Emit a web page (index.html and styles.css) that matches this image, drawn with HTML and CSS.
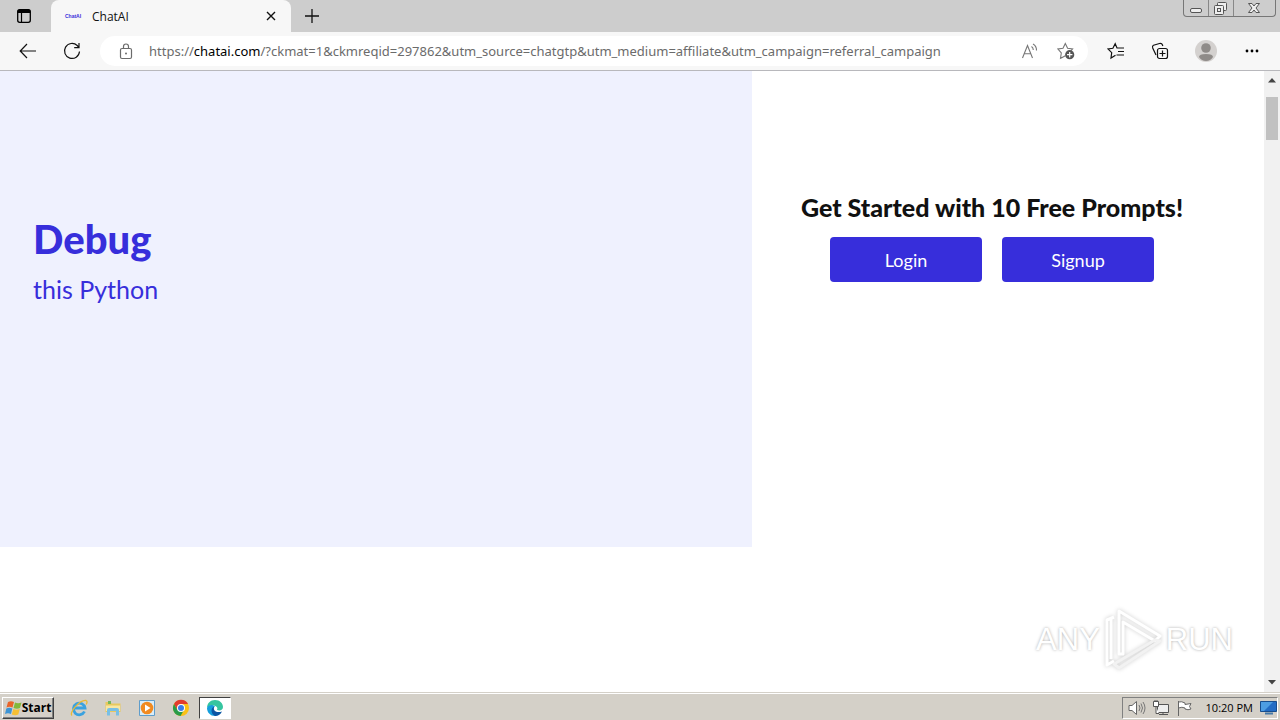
FILE: index.html
```html
<!DOCTYPE html>
<html lang="en">
<head>
<meta charset="utf-8">
<title>ChatAI</title>
<link rel="stylesheet" href="styles.css">
</head>
<body>
<div class="desktop">
  <header class="browser">
    <div class="tabstrip">
      <button class="tab-actions" aria-label="Tab actions">
        <svg width="16" height="16" viewBox="0 0 16 16"><rect x="1.7" y="1.7" width="12.6" height="12.6" rx="2" fill="none" stroke="#000" stroke-width="1.3"/><path d="M1.500 5V3.500a2 2 0 0 1 2-2h9a2 2 0 0 1 2 2V5z"/><path d="M5.500 5v9" stroke="#000" stroke-width="1.200"/></svg>
      </button>
      <div class="tab">
        <span class="favicon">ChatAI</span>
        <span class="tab-title">ChatAI</span>
        <button class="tab-close" aria-label="Close tab"><svg width="10" height="10" viewBox="0 0 10 10"><path d="M1 1l8 8M9 1l-8 8" stroke="#111" stroke-width="1.400"/></svg></button>
      </div>
      <button class="new-tab" aria-label="New tab"><svg width="14" height="14" viewBox="0 0 14 14"><path d="M7 0v14M0 7h14" stroke="#111" stroke-width="1.300"/></svg></button>
      <div class="window-controls">
        <button class="wc" aria-label="Minimize"><svg width="24" height="16" viewBox="0 0 24 16"><rect x="6.500" y="8.500" width="11" height="4" rx="1.500" fill="#eee" stroke="#555"/></svg></button>
        <button class="wc" aria-label="Restore"><svg width="24" height="16" viewBox="0 0 24 16"><g fill="#eee" stroke="#555"><rect x="8.500" y="2.500" width="9" height="8" rx="1"/><rect x="5.500" y="5.500" width="9" height="9" rx="1"/><rect x="8.500" y="8.500" width="3" height="3"/></g></svg></button>
        <button class="wc" aria-label="Close window"><svg width="41" height="16" viewBox="0 0 41 16"><path d="M14.500 3.500h3.500l2 2.500 2-2.500h3.500l-3.500 4.500 3.500 4.500h-3.500l-2-2.500-2 2.500h-3.500l3.500-4.500z" fill="#eee" stroke="#555"/></svg></button>
      </div>
    </div>
    <div class="toolbar">
      <button class="tool back" aria-label="Back"><svg width="18" height="16" viewBox="0 0 18 16"><path d="M17 8H1.500M8 1L1.200 8 8 15" fill="none" stroke="#111" stroke-width="1.200"/></svg></button>
      <button class="tool reload" aria-label="Refresh"><svg width="18" height="18" viewBox="0 0 18 18"><path d="M16.500 9.500A7.500 7.500 0 1 1 14.200 3.500L16 5.500M16 1v4.700h-4.800" fill="none" stroke="#111" stroke-width="1.200"/></svg></button>
      <div class="address">
        <svg class="lock" width="14" height="17" viewBox="0 0 14 17"><rect x="1.500" y="5.500" width="11" height="10" rx="1.500" fill="none" stroke="#6b6b6b" stroke-width="1.200"/><path d="M4.500 5.500V3.500a2.500 2.500 0 0 1 5 0v2" fill="none" stroke="#6b6b6b" stroke-width="1.200"/><circle cx="7" cy="10.500" r="1" fill="#6b6b6b"/></svg>
        <span class="url">https://<b>chatai.com</b>/?ckmat=1&amp;ckmreqid=297862&amp;utm_source=chatgtp&amp;utm_medium=affiliate&amp;utm_campaign=referral_campaign</span>
        <button class="in-address" aria-label="Read aloud"><svg width="18" height="16" viewBox="0 0 18 16"><path d="M1.500 15L6.500 2.500 11.500 15M3.200 10.700h6.600M10.500 3.500q1.800 1.200 1.800 3.500M12 1q3.600 2 3.500 6.500" fill="none" stroke="#777" stroke-width="1.100"/></svg></button>
        <button class="in-address" aria-label="Add to favorites"><svg width="18" height="18" viewBox="0 0 18 18"><path d="M5 15.500l-1.500.8.800-5.300L1 7l5-.8L8.300 1.500 10.600 6.200l5 .8-1.500 1.600M4.300 16l4-2.200" fill="none" stroke="#777" stroke-width="1.100"/><circle cx="12.700" cy="12.700" r="4.600" fill="#555"/><path d="M12.700 10v5.400M10 12.700h5.400" stroke="#fff" stroke-width="1.200"/></svg></button>
      </div>
      <button class="tool" aria-label="Favorites"><svg width="18" height="18" viewBox="0 0 18 18"><path d="M8.500 13.300L4 16l.7-5.400L1 7l4.900-.7L8.200 1.700 10 6h7M11 9.500h6M9.500 13h7.500" fill="none" stroke="#111" stroke-width="1.200"/></svg></button>
      <button class="tool" aria-label="Collections"><svg width="18" height="18" viewBox="0 0 18 18"><path d="M5 13L1.700 6Q1 4 2.500 3.300L8.500 1.500q2.200-.6 3 1.500l.3 1" fill="none" stroke="#111" stroke-width="1.200"/><rect x="6.500" y="6.500" width="10" height="10" rx="2" fill="#f7f7f7" stroke="#111" stroke-width="1.200"/><path d="M11.500 8.500v6M8.500 11.500h6" stroke="#111" stroke-width="1.200"/></svg></button>
      <button class="tool profile" aria-label="Profile"><svg width="22" height="22" viewBox="0 0 22 22"><circle cx="11" cy="11" r="11" fill="#d4d1cf"/><circle cx="11" cy="8" r="4.800" fill="#8f8b88"/><path d="M4 17q0-3 7-3t7 3q-2.500 4-7 4t-7-4z" fill="#8f8b88"/></svg></button>
      <button class="tool more" aria-label="Settings and more"><svg width="14" height="4" viewBox="0 0 14 4"><circle cx="2" cy="2" r="1.400"/><circle cx="7" cy="2" r="1.400"/><circle cx="12" cy="2" r="1.400"/></svg></button>
    </div>
  </header>

  <div class="viewport">
    <main class="page">
      <section class="demo">
        <h1 class="demo-title">Debug</h1>
        <p class="demo-text">this Python</p>
      </section>
      <section class="start">
        <h2 class="start-title">Get Started with 10 Free Prompts!</h2>
        <div class="actions">
          <button class="cta">Login</button>
          <button class="cta">Signup</button>
        </div>
      </section>
    </main>
    <div class="scrollbar">
      <svg width="8" height="5" viewBox="0 0 8 5"><path d="M0 4.500L4 0l4 4.500z" fill="#444"/></svg>
      <div class="track"><div class="thumb"></div></div>
      <svg width="8" height="5" viewBox="0 0 8 5"><path d="M0 0l4 4.500L8 0z" fill="#444"/></svg>
    </div>
    <div class="watermark">
      <span>ANY</span>
      <svg width="58" height="64" viewBox="0 0 58 64"><g fill="none" stroke="#fff" stroke-width="3" stroke-linejoin="round"><path d="M15 46V3l41 25-5 5-32-19v32z"/><path d="M10 9L3 12v45l7-4M7 11v40"/><path d="M10 56l41-24 5 1-41 27z" stroke="#f2f2f2"/></g></svg>
      <span>RUN</span>
    </div>
  </div>

  <footer class="taskbar">
    <button class="start-button"><svg width="17" height="16" viewBox="0 0 17 16"><path d="M3 2q3-1.500 6 0L7.500 7.500q-3-1.300-6 0z" fill="#ea6429"/><path d="M10 2.500q3 1.500 6.500 0L15 8q-3 1.500-6.500 0z" fill="#83b83b"/><path d="M1.300 8.500q3-1.300 6 0L6 14q-3-1.500-6 0z" fill="#3d94d5"/><path d="M8.300 9q3 1.500 6.500 0l-1.500 5.500q-3 1.500-6.500 0z" fill="#f6bf32"/></svg>Start</button>
    <button class="task" aria-label="Internet Explorer"><svg width="18" height="18" viewBox="0 0 18 18"><path d="M14.500 12.500a5.800 5.800 0 1 1 .5-3.500H5" fill="none" stroke="#3aa2df" stroke-width="2.800"/><path d="M2 16.500C-1.500 14 10 .500 16 1.500q2 1 .2 4" fill="none" stroke="#e9b934" stroke-width="1.300"/></svg></button>
    <button class="task" aria-label="Windows Explorer"><svg width="18" height="18" viewBox="0 0 18 18"><path d="M1.500 3h5l1 1.500h9V13h-15z" fill="#e8c85e"/><path d="M4 2h3v3H4z" fill="#77b858"/><path d="M2 6.500h14V12H2z" fill="#f8e7a2"/><path d="M3 16.500V11q0-2 2-2h8q2 0 2 2v5.500h-3V12H6v4.500z" fill="#78bfe5"/></svg></button>
    <button class="task" aria-label="Media Player"><svg width="18" height="18" viewBox="0 0 18 18"><path d="M1.500 1.500h15v15h-15z" fill="#d9edf9" stroke="#5f9dcb"/><circle cx="9" cy="9" r="6.300" fill="#f18a20"/><path d="M7 5.500v7L12.500 9z" fill="#fff"/></svg></button>
    <button class="task" aria-label="Chrome"><svg width="18" height="18" viewBox="0 0 18 18"><circle cx="9" cy="9" r="8" fill="#fbc116"/><path d="M2 5a8 8 0 0 1 14 0H9L5.500 11z" fill="#e23b2e"/><path d="M2 5a8 8 0 0 0 6.500 12l3.500-6H5.500z" fill="#289b49"/><circle cx="9" cy="9" r="4" fill="#fff"/><circle cx="9" cy="9" r="3" fill="#3b7de8"/></svg></button>
    <button class="task active" aria-label="Edge"><svg width="18" height="18" viewBox="0 0 18 18"><path d="M1 9C1 4 4.500 1 9 1c5 0 8 3.500 8 7 0 3-3 4.200-6 3 1-2 0-4-3-4.500C5 6 2 7 1 9z" fill="#36c5a0"/><path d="M1 9c1-3 5-4 8-1.500C6 8 5.500 14 10 17 4.500 17.500 1 13.500 1 9z" fill="#159edc"/><path d="M8.500 7.500C6.500 11 9.500 14.500 16 12.500 14 16.500 11 17.300 9 17c-4-2-5-8-.500-9.500z" fill="#0b56a4"/></svg></button>
    <div class="tray">
      <svg width="18" height="16" viewBox="0 0 18 16"><path d="M1 5.500h3L8.500 1.500v13L4 10.500H1z" fill="#fff" stroke="#666"/><path d="M11 5q2 3 0 6M13 3.500q3 4.500 0 9M15 2q4 6 0 12" fill="none" stroke="#777"/></svg>
      <svg width="18" height="16" viewBox="0 0 18 16"><path d="M5.500 4.500h11v8h-11zM7 14.500h9M11 13v2" fill="#eee" stroke="#555"/><path d="M1.500 1.500h5v5h-5zM4 6.500v7h3M3 0v2M5 0v2" fill="#fff" stroke="#555"/></svg>
      <svg width="17" height="16" viewBox="0 0 17 16"><path d="M2.500 1v15M2.500 2q3-1 6.500 1v1.500l6-1-1.500 3 1.500 2.500q-3 1.500-6 0V8q-3-1.500-6.500 0z" fill="#fff" stroke="#666"/></svg>
      <time class="clock">10:20 PM</time>
      <svg width="17" height="15" viewBox="0 0 17 15"><path d="M.500 1.500h16v10H.500z" fill="#236cc4" stroke="#174d8d"/><path d="M1 2h12L4 11H1z" fill="#4d9de2"/><path d="M5 13.500h8" stroke="#4779a7" stroke-width="2"/></svg>
    </div>
  </footer>
</div>
</body>
</html>
```
FILE: styles.css
```css
* { box-sizing: border-box; }
body { margin: 0; font-family: "Open Sans", sans-serif; color: #111; }
button { border: 0; padding: 0; background: none; font: inherit; color: inherit; display: flex; align-items: center; justify-content: center; }
svg { flex: none; display: block; }
.desktop { height: 100vh; display: flex; flex-direction: column; background: #fff; }

.tabstrip { height: 32px; display: flex; align-items: stretch; background: #cdcdcd; }
.tab-actions { width: 48px; }
.tab { width: 240px; margin-left: 3px; padding: 0 14px; display: flex; align-items: center; background: #f7f7f7; border-radius: 8px 8px 0 0; }
.favicon { width: 18px; font: bold 5px "Liberation Sans", sans-serif; color: #3a2edb; }
.tab-title { margin-left: 9px; flex: 1; font-size: 12px; }
.tab-close { width: 12px; height: 20px; }
.new-tab { width: 42px; }
.window-controls { height: 17px; margin-left: auto; margin-right: 4px; display: flex; border: 1px solid #777; border-top: 0; border-radius: 0 0 4px 4px; overflow: hidden; }
.wc + .wc { border-left: 1px solid #888; }

.toolbar { height: 39px; padding: 0 16px; display: flex; align-items: center; background: #f7f7f7; border-bottom: 1px solid #b8b8bc; }
.tool { width: 24px; height: 24px; margin-left: 20px; }
.back { margin-left: 0; }
.more, .profile { margin-left: 22px; }
.address { flex: 1; height: 30px; margin-left: 16px; margin-right: -4px; padding: 0 13px 0 19px; display: flex; align-items: center; background: #fff; border-radius: 15px; }
.url { flex: 1; margin-left: 16px; font-family: "Noto Sans", sans-serif; font-size: 13px; color: #6b6b6b; white-space: nowrap; }
.url b { font-weight: 400; color: #000; }
.in-address { margin-left: 18px; }

.viewport { flex: 1; min-height: 0; position: relative; display: flex; }
.page { flex: 1; display: flex; align-items: flex-start; font-family: "Lato", sans-serif; }
.demo { flex: 0 0 59.5%; padding: 144px 33px 242px; background: #eff1fe; color: #372edb; }
.demo-title { margin: 0; font-size: 40px; line-height: 48px; font-weight: 900; }
.demo-text { margin: 10px 0 0; font-size: 25px; line-height: 32px; }
.start { flex: 1; padding: 120px 32px 0 0; display: flex; flex-direction: column; align-items: center; }
.start-title { margin: 0; font-size: 25px; line-height: 32px; font-weight: 900; white-space: nowrap; }
.actions { margin-top: 14px; display: flex; gap: 20px; }
.cta { width: 152px; height: 45px; border-radius: 4px; background: #372edb; color: #fff; font-size: 18px; }
.scrollbar { width: 16px; padding: 7px 0; display: flex; flex-direction: column; align-items: center; background: #f1f1f1; }
.track { flex: 1; width: 12px; padding-top: 14px; }
.thumb { height: 43px; background: #c1c1c1; }
.watermark { position: absolute; right: 47px; bottom: 20px; display: flex; align-items: center; gap: 4px; font: 31px/64px "Liberation Sans", sans-serif; color: #fff; text-shadow: 0 0 3px #aaa; }
.watermark svg { filter: drop-shadow(0 0 2px #ccc); }

.taskbar { height: 28px; padding: 3px 2px 1px; display: flex; align-items: center; background: #d4d0c8; border-top: 1px solid #d4d0c8; box-shadow: inset 0 1px #fff; }
.start-button { width: 52px; height: 22px; border: 1px solid; border-color: #fff #404040 #404040 #fff; box-shadow: inset -1px -1px #808080; font: bold 12px "Open Sans", sans-serif; color: #000; }
.task { width: 32px; height: 22px; margin-left: 2px; }
.start-button + .task { margin-left: 9px; }
.active { background: #fff; border: 1px solid; border-color: #404040 #fff #fff #404040; }
.tray { height: 22px; margin-left: auto; padding: 0 0 0 5px; display: flex; align-items: center; gap: 6px; border: 1px solid; border-color: #808080 #fff #fff #808080; }
.clock { margin: 0 1px 0 7px; font-size: 11px; color: #000; }
```
